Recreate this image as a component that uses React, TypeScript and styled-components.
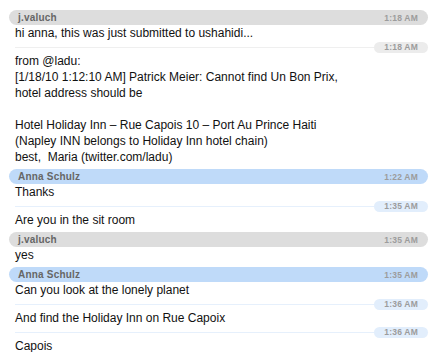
import React from "react";
import styled, { createGlobalStyle } from "styled-components";

const GlobalStyle = createGlobalStyle`
  html, body { margin: 0; padding: 0; background: #ffffff; }
  body { font-family: "Liberation Sans", Arial, sans-serif; }
`;

type Tone = "gray" | "blue";

const palette = {
  gray: { bar: "#dddddd", pill: "#ececec", line: "#efefef" },
  blue: { bar: "#bfdaf9", pill: "#e2eefc", line: "#e6f0fc" },
};

const Transcript = styled.div`
  display: flex;
  flex-direction: column;
  gap: 4px;
  padding: 10px 7px 0 9px;
  width: 419px;
`;

const Group = styled.section`
  display: flex;
  flex-direction: column;
`;

const HeaderBar = styled.div<{ $tone: Tone }>`
  display: flex;
  align-items: center;
  justify-content: space-between;
  height: 15px;
  padding: 0 10px 0 9px;
  border-radius: 8px;
  background: ${(p) => palette[p.$tone].bar};
`;

const Name = styled.span`
  color: #666666;
  font-size: 10px;
  font-weight: bold;
  letter-spacing: 0.2px;
`;

const Time = styled.span`
  color: #9c9c9c;
  font-size: 8.5px;
  font-weight: bold;
  letter-spacing: 0.2px;
`;

const Body = styled.div`
  padding-left: 6px;
  font-size: 12px;
  line-height: 16px;
  color: #111111;
  white-space: pre-wrap;
`;

const Divider = styled.div`
  display: flex;
  align-items: center;
  height: 12px;
  padding-left: 6px;
`;

const Rule = styled.div<{ $tone: Tone }>`
  flex: 1;
  height: 1px;
  background: ${(p) => palette[p.$tone].line};
`;

const Pill = styled.div<{ $tone: Tone }>`
  display: flex;
  align-items: center;
  justify-content: flex-end;
  width: 44px;
  height: 11px;
  padding-right: 10px;
  border-radius: 6px;
  background: ${(p) => palette[p.$tone].pill};
`;

type Msg = { time: string; text: string };
type G = { sender: string; tone: Tone; messages: Msg[] };

const groups: G[] = [
  {
    sender: "j.valuch",
    tone: "gray",
    messages: [
      { time: "1:18 AM", text: "hi anna, this was just submitted to ushahidi..." },
      {
        time: "1:18 AM",
        text:
          "from @ladu:\n[1/18/10 1:12:10 AM] Patrick Meier: Cannot find Un Bon Prix,\nhotel address should be\n\nHotel Holiday Inn – Rue Capois 10 – Port Au Prince Haiti\n(Napley INN belongs to Holiday Inn hotel chain)\nbest,  Maria (twitter.com/ladu)",
      },
    ],
  },
  {
    sender: "Anna Schulz",
    tone: "blue",
    messages: [
      { time: "1:22 AM", text: "Thanks" },
      { time: "1:35 AM", text: "Are you in the sit room" },
    ],
  },
  {
    sender: "j.valuch",
    tone: "gray",
    messages: [{ time: "1:35 AM", text: "yes" }],
  },
  {
    sender: "Anna Schulz",
    tone: "blue",
    messages: [
      { time: "1:35 AM", text: "Can you look at the lonely planet" },
      { time: "1:36 AM", text: "And find the Holiday Inn on Rue Capoix" },
      { time: "1:36 AM", text: "Capois" },
    ],
  },
];

export default function App() {
  return (
    <>
      <GlobalStyle />
      <Transcript>
        {groups.map((g, gi) => (
          <Group key={gi}>
            {g.messages.map((m, mi) => (
              <React.Fragment key={mi}>
                {mi === 0 ? (
                  <HeaderBar $tone={g.tone}>
                    <Name>{g.sender}</Name>
                    <Time>{m.time}</Time>
                  </HeaderBar>
                ) : (
                  <Divider>
                    <Rule $tone={g.tone} />
                    <Pill $tone={g.tone}>
                      <Time>{m.time}</Time>
                    </Pill>
                  </Divider>
                )}
                <Body>{m.text}</Body>
              </React.Fragment>
            ))}
          </Group>
        ))}
      </Transcript>
    </>
  );
}
